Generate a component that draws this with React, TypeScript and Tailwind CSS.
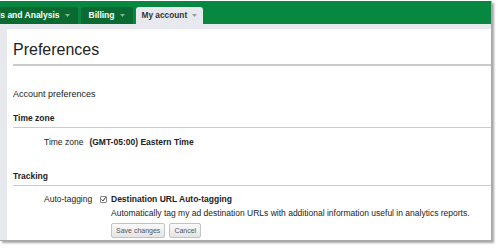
import React from 'react';

const font = { fontFamily: '"Liberation Sans", Arial, sans-serif' };

const Caret = ({ color }: { color: string }) => (
  <svg width="5" height="3" viewBox="0 0 5 3" className="ml-[5px]">
    <path d="M0 0h5L2.5 3z" fill={color} />
  </svg>
);

const App = () => {
  return (
    <div className="w-[500px] h-[248px] bg-white pt-[1px] overflow-hidden text-[#222]" style={font}>
      <div className="w-[492px] h-[240px] flex flex-col border-r border-b border-[#a9a9a9] shadow-[2px_2px_2px_rgba(0,0,0,0.35)]">
        {/* tab bar */}
        <div className="h-[23px] bg-[#07873f] flex items-end overflow-hidden shrink-0">
          <div className="flex items-end gap-[3px] ml-[-25px]">
            <div className="h-[17px] px-[8px] bg-[#0b6a31] rounded-t-[3px] flex items-center text-white font-bold text-[8.5px]">
              Tools and Analysis
              <Caret color="#7fb894" />
            </div>
            <div className="h-[17px] px-[8px] bg-[#0b6a31] rounded-t-[3px] flex items-center text-white font-bold text-[8.5px]">
              Billing
              <Caret color="#7fb894" />
            </div>
            <div className="h-[17px] pl-[6px] pr-[6px] bg-[#e7e9ee] rounded-t-[3px] flex items-center text-[#333] font-bold text-[8.3px]">
              My account
              <Caret color="#9a9a9a" />
            </div>
          </div>
        </div>
        <div className="h-[5px] bg-[#e7e9ee] shrink-0" />

        <div className="flex-1 flex">
          <div className="w-[7px] bg-[#e7e9ee]" />
          <div className="flex-1 bg-white pl-[6px] pt-[11px]">
            <h1 className="text-[16px] leading-[20px]">Preferences</h1>
            <div className="mt-[4px] h-[2px] bg-[#c9c9c9]" />

            <div className="mt-[22px] text-[9px] leading-[12px]">Account preferences</div>

            <div className="mt-[12px] text-[8.5px] leading-[12px] font-bold">Time zone</div>
            <div className="mt-[3px] h-px bg-[#cccccc]" />
            <div className="mt-[8px] ml-[31px] flex text-[8.5px] leading-[12px]">
              <span>Time zone</span>
              <span className="ml-[6px] font-bold">(GMT-05:00) Eastern Time</span>
            </div>

            <div className="mt-[22px] text-[8.5px] leading-[12px] font-bold">Tracking</div>
            <div className="mt-[3px] h-px bg-[#cccccc]" />
            <div className="mt-[7px] ml-[31px] flex text-[8.5px] leading-[12px]">
              <span className="w-[51px]">Auto-tagging</span>
              <div className="ml-[5px] flex flex-col">
                <div className="flex items-center">
                  <span className="w-[7px] h-[7px] border border-[#888] rounded-[1px] bg-white flex items-center justify-center">
                    <svg width="7" height="7" viewBox="0 0 7 7">
                      <path d="M1 3.5 L2.8 5.5 L6.5 0.5" stroke="#222" strokeWidth="1.3" fill="none" />
                    </svg>
                  </span>
                  <span className="ml-[4px] font-bold">Destination URL Auto-tagging</span>
                </div>
                <div className="ml-[11px] mt-[2px]">
                  Automatically tag my ad destination URLs with additional information useful in analytics reports.
                </div>
                <div className="ml-[11px] mt-[4px] flex gap-[4px]">
                  <button className="h-[15px] px-[4px] border border-[#c3c3c3] rounded-[2px] bg-gradient-to-b from-[#fafafa] to-[#e4e4e4] text-[7px] text-[#555]">
                    Save changes
                  </button>
                  <button className="h-[15px] px-[4px] border border-[#c3c3c3] rounded-[2px] bg-gradient-to-b from-[#fafafa] to-[#e4e4e4] text-[7px] text-[#555]">
                    Cancel
                  </button>
                </div>
              </div>
            </div>
          </div>
        </div>
      </div>
    </div>
  );
};

export default App;
